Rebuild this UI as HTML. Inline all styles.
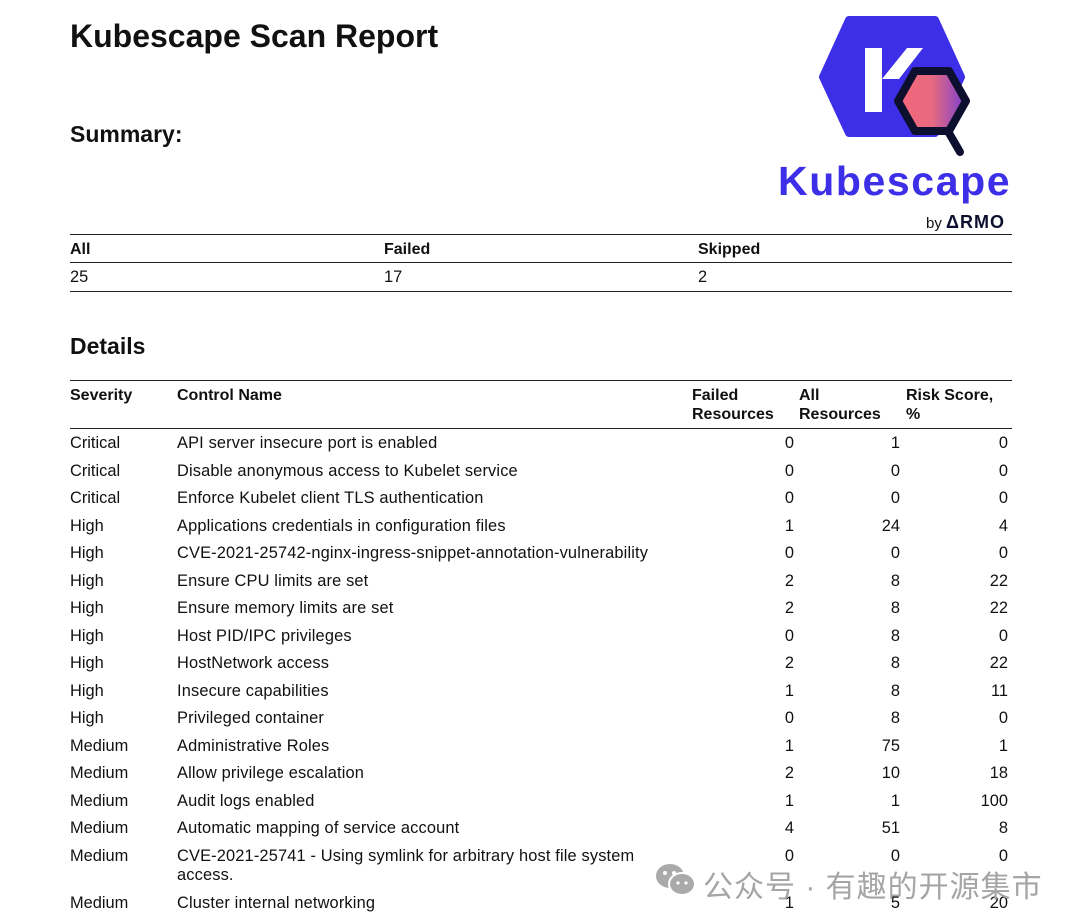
<!DOCTYPE html>
<html><head><meta charset="utf-8"><style>
body{margin:0;width:1080px;height:923px;background:#fff;font-family:"Liberation Sans","Noto Sans CJK SC",sans-serif;color:#111;position:relative;overflow:hidden}
.a{position:absolute;white-space:nowrap}
.h1{left:70px;top:18px;font-size:32px;font-weight:bold}
.h2{left:70px;font-size:23px;font-weight:bold}
.line{position:absolute;left:70px;width:942px;height:1px;background:#222}
.c{font-size:16.4px;line-height:19px}
.b{font-weight:bold;font-size:16px}
.r{text-align:right;width:60px}
</style></head><body>
<div class="a h1">Kubescape Scan Report</div>
<div class="a h2" style="top:121px">Summary:</div>
<svg class="a" style="left:815px;top:15px" width="160" height="145" viewBox="0 0 160 145">
<defs><linearGradient id="g" x1="0" x2="1"><stop offset="0" stop-color="#f3667a"/><stop offset="0.5" stop-color="#e86a80"/><stop offset="1" stop-color="#7a3fd0"/></linearGradient></defs>
<polygon points="34,5 120,5 146,62 120,118 34,118 8,62" fill="#3d2ee8" stroke="#3d2ee8" stroke-width="8" stroke-linejoin="round"/>
<rect x="50" y="33" width="17" height="64" fill="#fff"/>
<polygon points="67,64 92,33 108,33 84,64" fill="#fff"/>
<polygon points="100,56 134,56 151,86 134,116 100,116 83,86" fill="url(#g)" stroke="#0d0f2e" stroke-width="8" stroke-linejoin="round"/>
<line x1="134" y1="118" x2="145" y2="137" stroke="#0d0f2e" stroke-width="8" stroke-linecap="round"/>
</svg>
<div class="a" style="left:778px;top:158px;font-size:41px;font-weight:bold;color:#3d2ee8;letter-spacing:1.6px">Kubescape</div>
<div class="a" style="left:926px;top:212px;font-size:15px">by <b style="font-size:18px;color:#0d0f2e;letter-spacing:1px">ΔRMO</b></div>
<div class="line" style="top:234px"></div>
<div class="a c b" style="left:70px;top:240px">All</div>
<div class="a c b" style="left:384px;top:240px">Failed</div>
<div class="a c b" style="left:698px;top:240px">Skipped</div>
<div class="line" style="top:262px"></div>
<div class="a c" style="left:70px;top:268px">25</div>
<div class="a c" style="left:384px;top:268px">17</div>
<div class="a c" style="left:698px;top:268px">2</div>
<div class="line" style="top:291px"></div>
<div class="a h2" style="top:333px">Details</div>
<div class="line" style="top:380px"></div>
<div class="a c b" style="left:70px;top:386px">Severity</div>
<div class="a c b" style="left:177px;top:386px">Control Name</div>
<div class="a c b" style="left:692px;top:386px">Failed<br>Resources</div>
<div class="a c b" style="left:799px;top:386px">All<br>Resources</div>
<div class="a c b" style="left:906px;top:386px">Risk Score,<br>%</div>
<div class="line" style="top:428px"></div>
<div id="rows"></div>
<script>
var d=[["Critical","API server insecure port is enabled",0,1,0],["Critical","Disable anonymous access to Kubelet service",0,0,0],["Critical","Enforce Kubelet client TLS authentication",0,0,0],["High","Applications credentials in configuration files",1,24,4],["High","CVE-2021-25742-nginx-ingress-snippet-annotation-vulnerability",0,0,0],["High","Ensure CPU limits are set",2,8,22],["High","Ensure memory limits are set",2,8,22],["High","Host PID/IPC privileges",0,8,0],["High","HostNetwork access",2,8,22],["High","Insecure capabilities",1,8,11],["High","Privileged container",0,8,0],["Medium","Administrative Roles",1,75,1],["Medium","Allow privilege escalation",2,10,18],["Medium","Audit logs enabled",1,1,100],["Medium","Automatic mapping of service account",4,51,8],["Medium","CVE-2021-25741 - Using symlink for arbitrary host file system<br>access.",0,0,0],["Medium","Cluster internal networking",1,5,20]];
var h="";for(var i=0;i<d.length;i++){var t=434+i*27.5;if(i==16)t+=20;var r=d[i];
h+='<div class="a c" style="left:70px;top:'+t+'px">'+r[0]+'</div><div class="a c" style="left:177px;top:'+t+'px;letter-spacing:0.15px">'+r[1]+'</div><div class="a c r" style="left:734px;top:'+t+'px">'+r[2]+'</div><div class="a c r" style="left:840px;top:'+t+'px">'+r[3]+'</div><div class="a c r" style="left:948px;top:'+t+'px">'+r[4]+'</div>';}
document.getElementById("rows").innerHTML=h;
</script>
<svg class="a" style="left:655px;top:863px" width="42" height="34" viewBox="0 0 42 34"><ellipse cx="15" cy="13" rx="14" ry="12" fill="#aaa"/><ellipse cx="27" cy="21" rx="13" ry="11" fill="#aaa" stroke="#fff" stroke-width="2"/><circle cx="10" cy="10" r="2" fill="#fff"/><circle cx="19" cy="10" r="2" fill="#fff"/><circle cx="23" cy="20" r="1.6" fill="#fff"/><circle cx="31" cy="20" r="1.6" fill="#fff"/></svg>
<div class="a" style="left:703px;top:862px;font-size:30px;color:#a5a5a5;letter-spacing:1px">公众号 · 有趣的开源集市</div>
</body></html>
